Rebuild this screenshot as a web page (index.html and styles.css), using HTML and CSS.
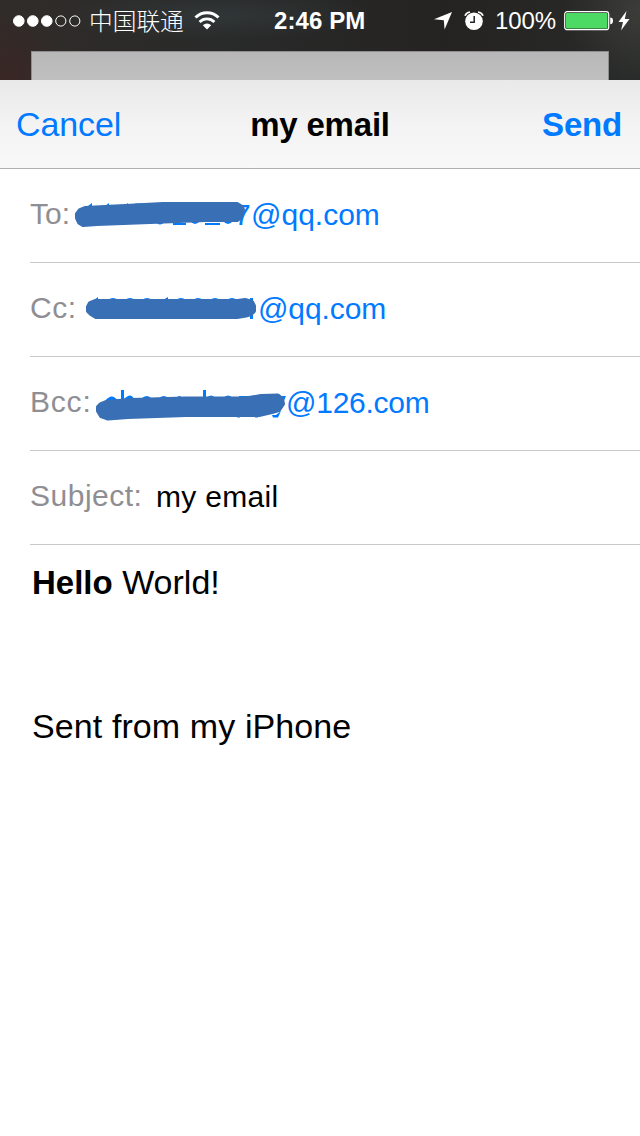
FILE: index.html
```html
<!DOCTYPE html>
<html lang="en">
<head>
    <meta charset="UTF-8">
    <meta name="viewport" content="width=device-width, initial-scale=1.0">
    <title>my email</title>
    <link rel="stylesheet" href="styles.css">
</head>
<body>
    <header class="backdrop">
        <div class="status-bar">
            <div class="status-left">
                <svg class="signal" viewBox="0 0 68 12" width="68" height="12">
                    <circle cx="5.8" cy="6" r="5.3" fill="#fff"/>
                    <circle cx="19.8" cy="6" r="5.3" fill="#fff"/>
                    <circle cx="33.8" cy="6" r="5.3" fill="#fff"/>
                    <circle cx="47.8" cy="6" r="5.1"/>
                    <circle cx="61.8" cy="6" r="5.1"/>
                </svg>
                <span class="carrier">中国联通</span>
                <svg class="wifi" viewBox="0 0 26 19" width="26" height="19">
                    <path d="M1.5 6.5A16.3 16.3 0 0 1 24.5 6.5" stroke-width="3"/>
                    <path d="M5.6 10.9A10.5 10.5 0 0 1 20.4 10.9" stroke-width="2.8"/>
                    <path d="M13 18.5L8.8 14.3A6 6 0 0 1 17.2 14.3Z" fill="#fff" stroke="none"/>
                </svg>
            </div>
            <span class="time">2:46 PM</span>
            <div class="status-right">
                <svg class="location" viewBox="0 0 18 18" width="18" height="18">
                    <path d="M18 0L10.6 17.6L9.8 8.2L0 7.3Z" fill="#fff"/>
                </svg>
                <svg class="alarm" viewBox="0 0 20 20" width="20" height="20">
                    <circle cx="10" cy="10.3" r="8.8" fill="#fff"/>
                    <path d="M1 4.8Q2.4 1.4 6 1M14 1Q17.6 1.4 19 4.8" fill="none" stroke="#fff" stroke-width="1.7"/>
                    <path d="M10.2 5V11.2H6" fill="none" stroke="#262424" stroke-width="1.5"/>
                </svg>
                <span class="percent">100%</span>
                <svg class="battery" viewBox="0 0 50 20" width="50" height="20">
                    <rect x=".7" y=".7" width="44" height="18" rx="2.5" fill="none" stroke="#fff" stroke-width="1.2"/>
                    <rect x="2" y="2" width="41.4" height="15.4" rx="1" fill="#4cd964"/>
                    <path d="M46.2 6.5Q49 6.5 49 9.8T46.2 13.2Z" fill="#fff"/>
                </svg>
                <svg class="bolt" viewBox="0 0 12 20" width="12" height="20">
                    <path d="M8.5 0L.5 11H5L3 19.5L11.5 8H6.8Z" fill="#fff"/>
                </svg>
            </div>
        </div>
        <div class="sheet-behind"></div>
    </header>

    <nav class="nav-bar">
        <a class="cancel">Cancel</a>
        <h1 class="title">my email</h1>
        <a class="send">Send</a>
    </nav>

    <main class="compose">
        <div class="field">
            <span class="label label-to">To:</span>
            <svg class="marker marker-to" viewBox="0 0 174 28" width="174" height="28">
                <path class="speck" d="M13 5L17 2V7ZM30 5L34 2V7ZM49 5L53 2V7ZM60 2.500H76V6H60ZM80 20Q85 27 90 20ZM98 22H111V24H98ZM115 20Q120 26 125 20ZM130 22H145V24H130ZM148 20Q153 26 158 20Z"/>
                <path class="ink" d="M10 7L60 4.5L88 3H162L167 6L168 9L165 17L162 19H131L75 21L22 23L8 24L4 21.5L2 17V13L5 9Z"/>
            </svg>
            <span class="address address-to"><span class="tail">7</span>@qq.com</span>
        </div>
        <div class="field">
            <span class="label label-cc">Cc:</span>
            <svg class="marker marker-cc" viewBox="0 0 172 26" width="172" height="26">
                <path class="speck" d="M8 5L12 2V5ZM22 5Q27 1 32 5ZM39 5Q44 1 49 5ZM56 5Q61 1 66 5ZM77 5L82 2V5ZM90 5Q95 1 100 5ZM107 5Q112 1 117 5ZM124 5Q129 1 134 5ZM141 5Q146 1 151 5ZM164 3H167V24H164ZM56 22Q61 26 65 22ZM90 22Q95 26 99 22ZM107 22Q112 26 116 22ZM124 22Q129 26 133 22Z"/>
                <path class="ink" d="M9 6H152L159 5L166 7L168 11V16L165 19L160 20.5L151 22H10L5 19L2 16V12L4 8Z"/>
            </svg>
            <span class="address address-cc">@qq.com</span>
        </div>
        <div class="field">
            <span class="label label-bcc">Bcc:</span>
            <svg class="marker marker-bcc" viewBox="0 0 190 32" width="190" height="32">
                <path class="speck" d="M9 8Q16 -1 22 8ZM25 -3H28V8H25ZM28 6Q35 -1 38 6ZM45 6Q51 0 56 6ZM62 6Q68 0 73 6ZM79 6Q84 0 87 6ZM107 -3H110V6H107ZM110 5Q116 0 119 5ZM127 5Q132 0 137 5ZM143 3H157V7H143ZM185 3H190L187 10ZM141 22H144V24.5H141ZM159 22H162V24.5H159ZM176 22H180L185 18L182 24.5H177Z"/>
                <path class="ink" d="M10 9L35 7L90 5.5H150L165 3L182 2.5L186 6L187 11L183 17L176 19L163 22H90L32 24L12 25.5L5 23L2 18V14L5 11Z"/>
            </svg>
            <span class="address address-bcc">@126.com</span>
        </div>
        <div class="field">
            <span class="label label-subject">Subject:</span>
            <span class="address subject">my email</span>
        </div>

        <div class="message">
            <p><b>Hello</b> World!</p>
            <p class="signature">Sent from my iPhone</p>
        </div>
    </main>
</body>
</html>
```

FILE: styles.css
```css
* {
    margin: 0;
    padding: 0;
    box-sizing: border-box;
}

body {
    width: 640px;
    min-height: 1136px;
    background: #fff;
    color: #000;
    font-family: "Liberation Sans", "Noto Sans CJK SC", Helvetica, Arial, sans-serif;
    white-space: nowrap;
}

svg {
    display: block;
    flex: none;
}

/* status bar and the dimmed screen under the sheet */
.backdrop {
    display: flex;
    flex-direction: column;
    height: 80px;
    background:
        radial-gradient(circle at 0 85px, #3b2625 0, transparent 75px),
        radial-gradient(ellipse at 215px 15px, #303637 0, transparent 160px),
        radial-gradient(circle at 640px 10px, #3c3d39 0, transparent 75px),
        linear-gradient(to right, #302c29, #292a2a 35%, #252322 70%, #282a29);
}

.status-bar {
    display: grid;
    grid-template-columns: 274px 1fr auto;
    align-items: center;
    height: 41px;
    padding: 0 10px 0 13px;
    color: #fff;
}

.status-left,
.status-right {
    display: flex;
    align-items: center;
}

.status-left {
    width: 261px;
}

.signal {
    fill: none;
    stroke: #fff;
    stroke-width: 1;
}

.carrier {
    width: 95px;
    margin-left: 8px;
    padding-bottom: 2px;
    font: 300 23.7px/38px "Noto Sans CJK SC", sans-serif;
}

.wifi {
    margin-left: 10px;
    fill: none;
    stroke: #fff;
}

.time {
    margin-left: -13px;
    font-size: 24px;
    font-weight: bold;
    letter-spacing: .1px;
}

.alarm {
    margin-left: 12px;
}

.percent {
    width: 61px;
    margin-left: 11px;
    font-size: 24px;
    letter-spacing: -.1px;
}

.battery {
    margin-left: 8px;
}

.bolt {
    margin-left: 4px;
}

.sheet-behind {
    width: 578px;
    height: 29px;
    margin: 10px 0 0 31px;
    border: 1px solid #8e8e90;
    border-bottom: 0;
    background: linear-gradient(#b7b7b7, #c0c0c0);
}

.nav-bar {
    display: grid;
    grid-template-columns: 1fr auto 1fr;
    align-items: center;
    height: 89px;
    padding: 0 17px 0 17px;
    border-bottom: 1px solid #b0b0b2;
    background: linear-gradient(#e9e9e9, #f3f3f3 50%, #f8f8f9);
    font-size: 34px;
}

.nav-bar a {
    color: #007aff;
}

.cancel {
    margin-left: -1px;
    letter-spacing: -.1px;
}

.nav-bar .title,
.nav-bar .send {
    padding-top: 2px;
    font-size: 33px;
    font-weight: bold;
    letter-spacing: -.2px;
}

.nav-bar .send {
    justify-self: end;
    margin-right: 1px;
}

.field {
    display: flex;
    align-items: center;
    height: 94px;
    margin-left: 30px;
    padding-bottom: 2px;
    border-bottom: 1px solid #c8c7cc;
    font-size: 30px;
}

.label {
    margin-top: -2px;
    color: #8e8e93;
}

.label-to { width: 45px; }

.label-cc {
    width: 56px;
    letter-spacing: .5px;
}

.label-bcc {
    width: 66px;
    letter-spacing: .8px;
}

.label-subject {
    width: 126px;
    letter-spacing: .5px;
}

.address {
    color: #007aff;
}

.subject {
    color: #000;
    letter-spacing: .3px;
}

/* the marker stroke lies over the address */
.marker {
    position: relative;
    z-index: 1;
    overflow: visible;
}

.ink {
    fill: #3970b5;
    stroke: #3970b5;
    stroke-width: 4;
    stroke-linejoin: round;
}

.speck {
    fill: #007aff;
}

.marker-cc {
    margin-top: -2px;
}

.marker-bcc {
    margin-top: 13px;
}

.address-to {
    margin-left: -15px;
}

.address-to .tail {
    display: inline-block;
    width: 17px;
}

.address-cc {
    letter-spacing: -.1px;
}

.address-bcc {
    letter-spacing: -.25px;
}

.message {
    padding: 13px 32px;
    font-size: 34px;
    line-height: 48px;
}

.message b {
    font-size: 33px;
}

.signature {
    margin-top: 95px;
    letter-spacing: .1px;
}
```
